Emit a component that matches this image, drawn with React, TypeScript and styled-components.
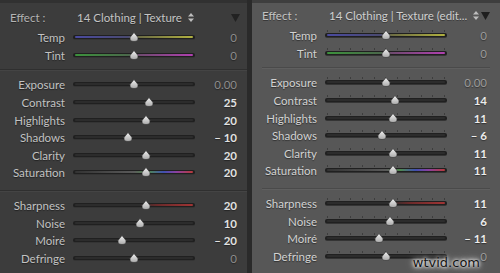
import React from "react";
import styled, { createGlobalStyle } from "styled-components";

const Global = createGlobalStyle`
  html, body {
    margin: 0;
    padding: 0;
    background: #2b2b2b;
  }
  body {
    font-family: Lato, "Open Sans", sans-serif;
  }
`;

const Screen = styled.div`
  position: relative;
  display: flex;
  gap: 5px;
  width: 500px;
  height: 273px;
  overflow: hidden;
  background: #2a2a2a;
`;

const Panel = styled.div<{ $light?: boolean }>`
  width: ${(p) => (p.$light ? "248px" : "247px")};
  height: 273px;
  box-sizing: border-box;
  padding: ${(p) => (p.$light ? "2px 13px 0 0" : "4px 10px 0 0")};
  background: ${(p) => (p.$light ? "#575757" : "#3c3c3c")};
  border-top: 3px solid ${(p) => (p.$light ? "#3e3e3e" : "#313131")};
  display: flex;
  flex-direction: column;
`;

const EffectRow = styled.div`
  display: flex;
  align-items: center;
  height: 21px;
  padding-left: 10px;
  font-size: 11.5px;
`;

const EffectLabel = styled.span<{ $light?: boolean }>`
  width: 67px;
  color: ${(p) => (p.$light ? "#c4c4c4" : "#b4b4b4")};
  text-shadow: 0 1px 0 rgba(0, 0, 0, 0.35);
`;

const EffectValue = styled.span<{ $light?: boolean }>`
  flex: 1;
  display: flex;
  align-items: center;
  gap: 6px;
  color: ${(p) => (p.$light ? "#d0d0d0" : "#c4c4c4")};
  text-shadow: 0 1px 0 rgba(0, 0, 0, 0.35);
`;

const Disclosure = styled.span`
  margin-right: -3px;
  display: flex;
`;

const Section = styled.div<{ $top: number }>`
  display: flex;
  flex-direction: column;
  margin-top: ${(p) => p.$top}px;
`;

const Separator = styled.div<{ $light?: boolean; $top: number }>`
  height: 1px;
  margin-top: ${(p) => p.$top}px;
  margin-left: ${(p) => (p.$light ? "10px" : "0")};
  margin-right: ${(p) => (p.$light ? "-3px" : "-10px")};
  background: ${(p) => (p.$light ? "#4a4a4a" : "#2f2f2f")};
  box-shadow: 0 1px 0 ${(p) => (p.$light ? "#5f5f5f" : "#444")};
`;

const Row = styled.div`
  display: grid;
  grid-template-columns: 65px 122px 1fr;
  column-gap: 8px;
  align-items: center;
  height: 17.6px;
`;

const Label = styled.span<{ $light?: boolean }>`
  text-align: right;
  font-size: 11.5px;
  color: ${(p) => (p.$light ? "#d2d2d2" : "#c2c2c2")};
  text-shadow: 0 1px 1px rgba(0, 0, 0, 0.45);
  white-space: nowrap;
`;

const Value = styled.span<{ $dim?: boolean; $light?: boolean }>`
  text-align: right;
  font-size: 11.5px;
  font-weight: ${(p) => (p.$dim ? 400 : 700)};
  color: ${(p) =>
    p.$dim ? (p.$light ? "#9a9a9a" : "#8c8c8c") : p.$light ? "#ececec" : "#e2e2e2"};
  text-shadow: 0 1px 1px rgba(0, 0, 0, 0.4);
`;

const Track = styled.div<{ $fill: string }>`
  position: relative;
  height: 4px;
  border-radius: 2px;
  background: #202020;
  border-bottom: 1px solid rgba(255, 255, 255, 0.09);
  &::before {
    content: "";
    position: absolute;
    left: 2px;
    right: 2px;
    top: 1px;
    height: 2px;
    border-radius: 1px;
    background: ${(p) => p.$fill};
  }
`;

const Ticks = styled.div`
  position: absolute;
  left: 2px;
  right: 2px;
  top: -3px;
  height: 2px;
  display: flex;
  justify-content: space-between;
  > i {
    width: 1px;
    height: 2px;
    background: rgba(40, 40, 40, 0.55);
  }
`;

const Thumb = styled.svg`
  position: absolute;
  top: -3px;
  width: 10px;
  height: 10px;
  margin-left: -5px;
  overflow: visible;
`;

const Watermark = styled.div`
  position: absolute;
  right: 20px;
  bottom: 3px;
  font-family: "DejaVu Sans", sans-serif;
  font-size: 13px;
  color: #141414;
  text-shadow: 0 0 3px #fff, 0 0 5px #fff, 0 0 8px rgba(255, 255, 255, 0.8);
`;

type Slider = { label: string; value: string; v: number; fill?: string; dim?: boolean };

const plain = "#2c2c2c";
const temp = "linear-gradient(90deg, #4a4aa0, #4a4a70 45%, #6e6e44 55%, #b0b040)";
const tint = "linear-gradient(90deg, #3c923c, #4a684a 45%, #704a70 55%, #b040b0)";
const sat =
  "linear-gradient(90deg, #333, #5a5a5a 50%, #4f8a4f 62%, #4050b0 75%, #8a40a0 86%, #b83a3a)";
const sharp = "linear-gradient(90deg, #2c2c2c 55%, #6a2a2a 70%, #a03434)";

const makePanel = (e: string, vals: number[][]) => {
  const [tp, bs, dt] = vals;
  const fmt = (n: number) => (n < 0 ? `– ${-n}` : `${n}`);
  return {
    effect: e,
    top: [
      { label: "Temp", value: "0", v: tp[0], fill: temp, dim: true },
      { label: "Tint", value: "0", v: tp[1], fill: tint, dim: true },
    ] as Slider[],
    basic: [
      { label: "Exposure", value: "0.00", v: 0, dim: true },
      { label: "Contrast", value: fmt(bs[0]), v: bs[0] },
      { label: "Highlights", value: fmt(bs[1]), v: bs[1] },
      { label: "Shadows", value: fmt(bs[2]), v: bs[2] },
      { label: "Clarity", value: fmt(bs[3]), v: bs[3] },
      { label: "Saturation", value: fmt(bs[4]), v: bs[4], fill: sat },
    ] as Slider[],
    detail: [
      { label: "Sharpness", value: fmt(dt[0]), v: dt[0], fill: sharp },
      { label: "Noise", value: fmt(dt[1]), v: dt[1] },
      { label: "Moiré", value: fmt(dt[2]), v: dt[2] },
      { label: "Defringe", value: "0", v: 0, dim: true },
    ] as Slider[],
  };
};

const panels = [
  makePanel("14 Clothing | Texture", [[0, 0], [25, 20, -10, 20, 20], [20, 10, -20]]),
  makePanel("14 Clothing | Texture (edit...", [[0, 0], [14, 11, -6, 11, 11], [11, 6, -11]]),
];

const UpDown = () => (
  <svg width="6" height="9" viewBox="0 0 6 9">
    <path d="M3 0 L6 3.5 H0 Z M3 9 L6 5.5 H0 Z" fill="#bdbdbd" />
  </svg>
);

const SliderRow = ({ s, light }: { s: Slider; light?: boolean }) => (
  <Row>
    <Label $light={light}>{s.label}</Label>
    <Track $fill={s.fill || plain}>
      {light && (
        <Ticks>
          {Array.from({ length: 11 }).map((_, i) => (
            <i key={i} />
          ))}
        </Ticks>
      )}
      <Thumb viewBox="0 0 10 10" style={{ left: `${61 + s.v * 0.61}px` }}>
        <defs>
          <linearGradient id="tg" x1="0" y1="0" x2="0" y2="1">
            <stop offset="0" stopColor="#f2f2f2" />
            <stop offset="1" stopColor="#a9a9a9" />
          </linearGradient>
        </defs>
        <path
          d="M5 0.5 L8.8 5.2 Q10 9.5 5 9.5 Q0 9.5 1.2 5.2 Z"
          fill="url(#tg)"
          stroke="#2a2a2a"
          strokeWidth="0.6"
        />
      </Thumb>
    </Track>
    <Value $dim={s.dim} $light={light}>
      {s.value}
    </Value>
  </Row>
);

export default function App() {
  return (
    <Screen>
      <Global />
      {panels.map((p, i) => {
        const light = i === 1;
        return (
          <Panel key={i} $light={light}>
            <EffectRow>
              <EffectLabel $light={light}>Effect :</EffectLabel>
              <EffectValue $light={light}>
                {p.effect}
                <UpDown />
              </EffectValue>
              <Disclosure>
                <svg width="9" height="8" viewBox="0 0 9 8">
                  <path d="M0 0 H9 L4.5 8 Z" fill={light ? "#1e1e1e" : "#222"} />
                </svg>
              </Disclosure>
            </EffectRow>
            <Section $top={1}>
              {p.top.map((s) => (
                <SliderRow key={s.label} s={s} light={light} />
              ))}
            </Section>
            <Separator $light={light} $top={5} />
            <Section $top={6}>
              {p.basic.map((s) => (
                <SliderRow key={s.label} s={s} light={light} />
              ))}
            </Section>
            <Separator $light={light} $top={8} />
            <Section $top={6}>
              {p.detail.map((s) => (
                <SliderRow key={s.label} s={s} light={light} />
              ))}
            </Section>
          </Panel>
        );
      })}
      <Watermark>wtvid.com</Watermark>
    </Screen>
  );
}
